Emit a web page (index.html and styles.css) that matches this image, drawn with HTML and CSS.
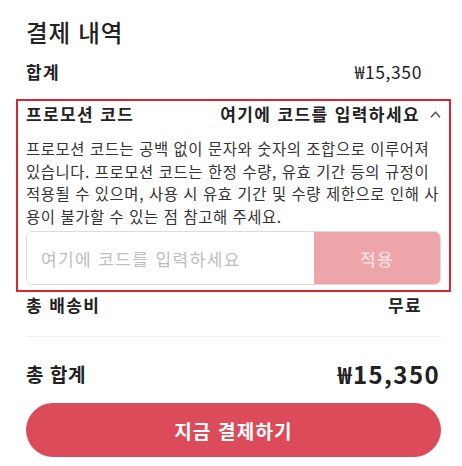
FILE: index.html
```html
<!DOCTYPE html>
<html lang="ko">
<head>
<meta charset="utf-8">
<link rel="stylesheet" href="styles.css">
</head>
<body>
<div class="page">
  <h2 class="title">결제 내역</h2>
  <div class="row sub">
    <span class="label">합계</span>
    <span class="value">₩15,350</span>
  </div>
  <div class="divider top"></div>
  <section class="promo">
    <div class="promo-head">
      <span class="label">프로모션 코드</span>
      <span class="promo-toggle">여기에 코드를 입력하세요
        <svg class="chev" width="11" height="7" viewBox="0 0 11 7"><path d="M1 6.2 L5.5 1.2 L10 6.2" fill="none" stroke="#444" stroke-width="1.3"/></svg>
      </span>
    </div>
    <p class="desc">프로모션 코드는 공백 없이 문자와 숫자의 조합으로 이루어져 있습니다. 프로모션 코드는 한정 수량, 유효 기간 등의 규정이 적용될 수 있으며, 사용 시 유효 기간 및 수량 제한으로 인해 사용이 불가할 수 있는 점 참고해 주세요.</p>
    <div class="code-form">
      <input class="code-input" type="text" placeholder="여기에 코드를 입력하세요">
      <button class="apply" type="button">적용</button>
    </div>
  </section>
  <div class="row sub ship">
    <span class="label">총 배송비</span>
    <span class="value strong">무료</span>
  </div>
  <div class="divider"></div>
  <div class="row total">
    <span class="label">총 합계</span>
    <span class="value">₩15,350</span>
  </div>
  <button class="pay" type="button">지금 결제하기</button>
</div>
</body>
</html>
```
FILE: styles.css
```css
* { box-sizing: border-box; }
body {
  margin: 0;
  background: #fff;
  color: #222;
  font-family: "Noto Sans CJK KR", "Noto Sans", sans-serif;
}
.page {
  padding: 16px 21px 0 26px;
}
.title {
  margin: 0;
  font-size: 23.5px;
  letter-spacing: 0.8px;
  font-weight: 500;
  line-height: 32px;
  color: #222;
}
.row {
  display: flex;
  justify-content: space-between;
  align-items: center;
}
.sub {
  font-size: 17px;
  letter-spacing: 1.4px;
  line-height: 24px;
  padding-right: 19px;
  margin-top: 12px;
}
.label { font-weight: 700; }
.value { font-weight: 400; }
.sub .value { font-size: 17.5px; letter-spacing: 0.6px; }
.sub .value.strong { font-size: 17px; letter-spacing: 1.4px; font-weight: 700; }
.divider {
  height: 1px;
  background: #eee;
}
.divider.top { margin: 15px -10px 0; background: #f3ece8; }
.promo {
  margin: -1px -10px 0;
  border: 2px solid #d9262f;
  padding: 1px 8px 5px;
}
.promo-head {
  display: flex;
  justify-content: space-between;
  align-items: center;
  font-size: 17px;
  letter-spacing: 1.4px;
  line-height: 24px;
  font-weight: 700;
}
.promo-toggle {
  display: flex;
  align-items: center;
  gap: 10px;
}
.desc {
  margin: 11px 0 0;
  font-size: 15.4px;
  letter-spacing: 0.6px;
  line-height: 22.5px;
  color: #333;
  font-weight: 400;
}
.code-form {
  display: flex;
  margin-top: 4px;
  height: 54px;
  border: 1px solid #ddd;
  border-radius: 6px;
  overflow: hidden;
}
.code-input {
  flex: 1;
  min-width: 0;
  border: 0;
  outline: none;
  padding: 0 14px;
  font-family: inherit;
  font-size: 17px;
  letter-spacing: 1.4px;
  color: #222;
  background: #fff;
}
.code-input::placeholder { color: #bdbdbd; }
.apply {
  width: 126px;
  border: 0;
  background: #eda5aa;
  color: #f9dfe1;
  font-family: inherit;
  font-size: 17px;
  letter-spacing: 1.4px;
  font-weight: 500;
}
.ship { margin-top: 1px; padding-right: 19px; }
.ship + .divider { margin-top: 19px; }
.total {
  margin-top: 21px;
  line-height: 32px;
}
.total .label { font-size: 19px; letter-spacing: 0.6px; }
.total .value { font-size: 24px; letter-spacing: 1.4px; font-weight: 700; color: #222; margin-right: 1px; }
.pay {
  display: block;
  width: 100%;
  height: 54px;
  margin-top: 13px;
  border: 0;
  border-radius: 27px;
  background: #dc4b59;
  color: #fff;
  font-family: inherit;
  font-size: 19px;
  letter-spacing: 1.2px;
  font-weight: 700;
}
```
